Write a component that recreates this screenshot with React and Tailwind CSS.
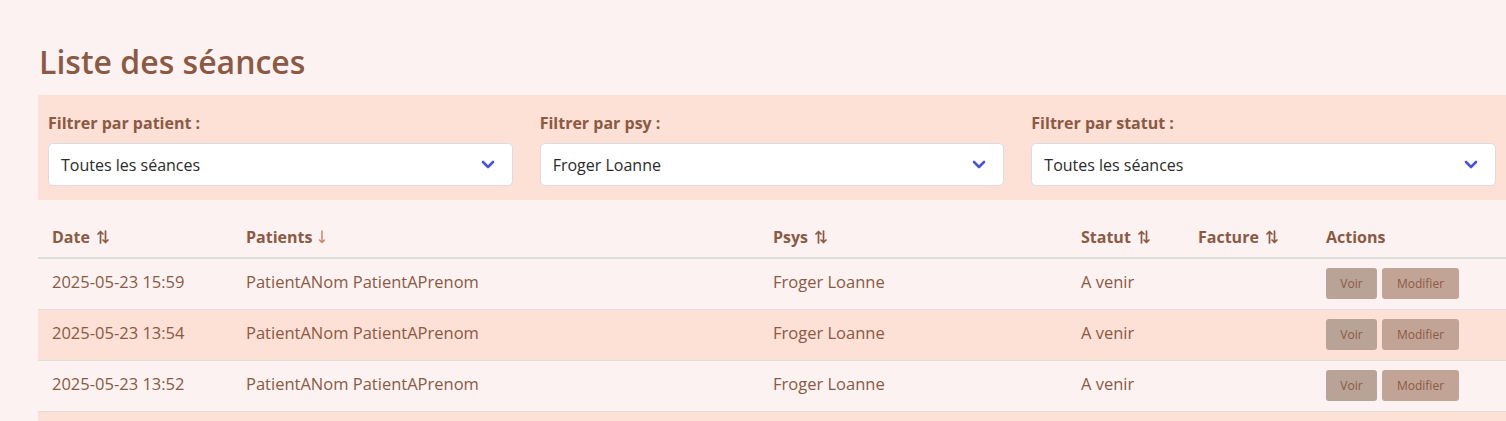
import React from "react";

const rows = [
  { date: "2025-05-23 15:59", patient: "PatientANom PatientAPrenom", psy: "Froger Loanne", statut: "A venir" },
  { date: "2025-05-23 13:54", patient: "PatientANom PatientAPrenom", psy: "Froger Loanne", statut: "A venir" },
  { date: "2025-05-23 13:52", patient: "PatientANom PatientAPrenom", psy: "Froger Loanne", statut: "A venir" },
];

const Chevron = () => (
  <svg width="14" height="9" viewBox="0 0 14 9" className="shrink-0">
    <polyline points="2,2 7,7 12,2" fill="none" stroke="#4a56d0" strokeWidth="2.6" strokeLinecap="round" strokeLinejoin="round" />
  </svg>
);

const FilterSelect = ({ label, value }) => (
  <div className="flex flex-col">
    <label className="text-[16px] font-bold text-[#8a5a44] leading-5 mb-[10px]">{label}</label>
    <div className="h-[43px] bg-white border border-[#dcdcdc] rounded-[5px] flex items-center justify-between pl-3 pr-[17px]">
      <span className="text-[16px] text-[#2b2b2b]">{value}</span>
      <Chevron />
    </div>
  </div>
);

// two small arrows, up then down
const Sort = () => (
  <svg width="12" height="14" viewBox="0 0 12 14" className="inline-block ml-[7px] align-[-1px]">
    <g fill="none" stroke="#8a5a44" strokeWidth="1.7" strokeLinecap="round" strokeLinejoin="round">
      <path d="M3.5 13V1.5M1 4l2.5-2.5L6 4" />
      <path d="M8.5 1v11.5M6 10l2.5 2.5L11 10" />
    </g>
  </svg>
);

const SortDown = () => (
  <svg width="8" height="14" viewBox="0 0 8 14" className="inline-block ml-[6px] align-[-1px]">
    <path d="M4 1v11.5M1.5 10L4 12.5 6.5 10" fill="none" stroke="#c9825c" strokeWidth="1.4" strokeLinecap="round" strokeLinejoin="round" />
  </svg>
);

export default function App() {
  return (
    <div className="min-h-screen w-full bg-[#fcf2f2] pl-[38px] pt-[42px] text-[#8a5a44] overflow-hidden" style={{ fontFamily: '"Open Sans", "Noto Sans", sans-serif' }}>
      <h1 className="text-[32px] font-semibold leading-[40px] mb-[13px] pl-px">Liste des séances</h1>

      <div className="bg-[#fde0d6] grid grid-cols-3 gap-[27px] pl-[10px] pr-[10px] pt-[18px] pb-[14px]">
        <FilterSelect label="Filtrer par patient :" value="Toutes les séances" />
        <FilterSelect label="Filtrer par psy :" value="Froger Loanne" />
        <FilterSelect label="Filtrer par statut :" value="Toutes les séances" />
      </div>

      <table className="w-full table-fixed border-collapse mt-4 text-[16.5px]">
        <colgroup>
          <col className="w-[194px]" />
          <col className="w-[527px]" />
          <col className="w-[308px]" />
          <col className="w-[117px]" />
          <col className="w-[128px]" />
          <col />
        </colgroup>
        <thead>
          <tr className="border-b-2 border-[#dcdcdc] h-[42px] text-[16px]">
            <th className="text-left font-bold pl-[14px]">Date<Sort /></th>
            <th className="text-left font-bold pl-[14px]">Patients<SortDown /></th>
            <th className="text-left font-bold pl-[14px]">Psys<Sort /></th>
            <th className="text-left font-bold pl-[14px]">Statut<Sort /></th>
            <th className="text-left font-bold pl-[14px]">Facture<Sort /></th>
            <th className="text-left font-bold pl-[14px]">Actions</th>
          </tr>
        </thead>
        <tbody>
          {rows.map((r, i) => (
            <tr key={i} className={`h-[51px] border-b border-[#dedede] ${i % 2 === 1 ? "bg-[#fde0d6]" : "bg-[#fcf2f2]"}`}>
              <td className="pl-[14px] pb-[3px]">{r.date}</td>
              <td className="pl-[14px] pb-[3px]">{r.patient}</td>
              <td className="pl-[14px] pb-[3px]">{r.psy}</td>
              <td className="pl-[14px] pb-[3px]">{r.statut}</td>
              <td className="pl-[14px]"></td>
              <td className="pl-[14px]">
                <div className="flex gap-[5px]">
                  <button className="h-[31px] w-[51px] rounded-[3px] bg-[#b8a396] text-[12px] text-[#8a5a44]">Voir</button>
                  <button className="h-[31px] w-[77px] rounded-[3px] bg-[#c2a496] text-[12px] text-[#8a5a44]">Modifier</button>
                </div>
              </td>
            </tr>
          ))}
          {/* next row starts at the bottom edge of the view */}
          <tr className="h-[51px] bg-[#fde0d6]">
            <td colSpan={6}></td>
          </tr>
        </tbody>
      </table>
    </div>
  );
}
